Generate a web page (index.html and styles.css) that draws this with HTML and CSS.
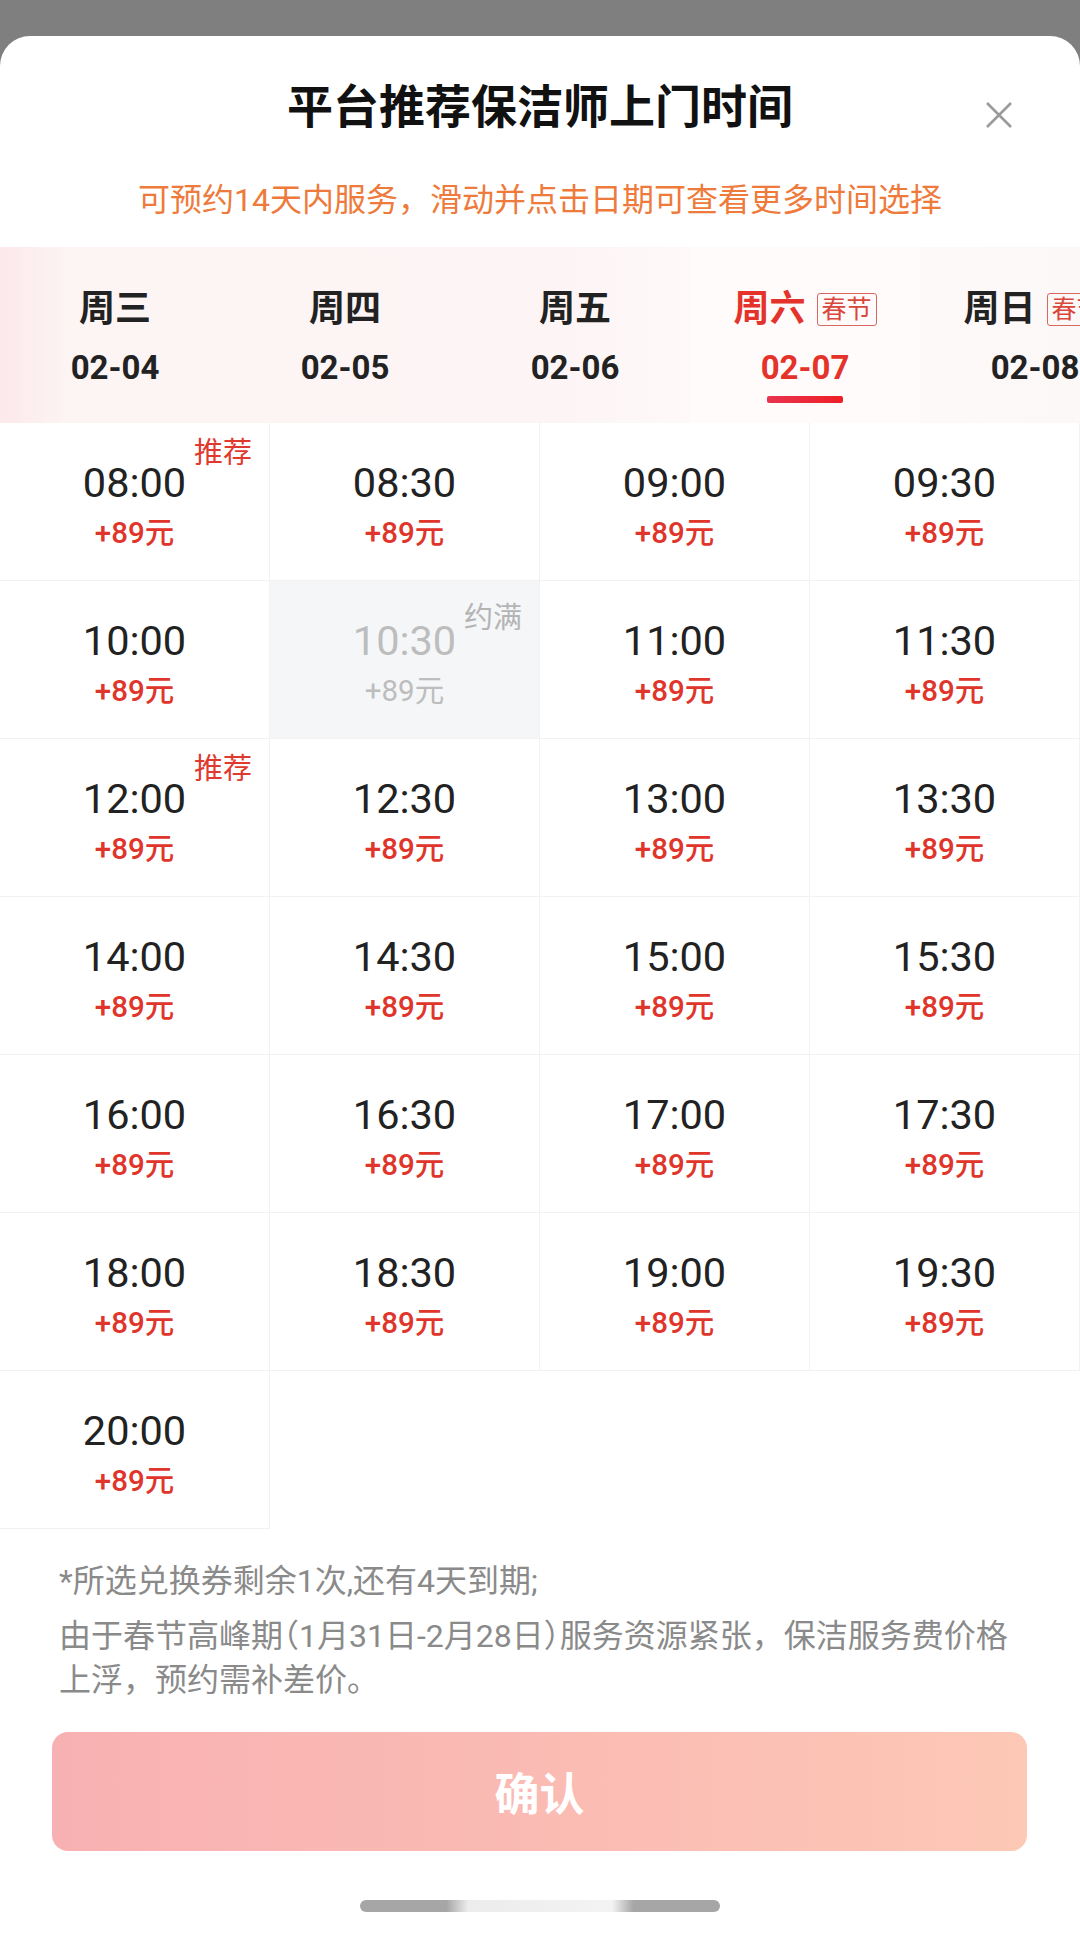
FILE: index.html
```html
<!DOCTYPE html>
<html lang="zh-CN">
<head>
  <meta charset="UTF-8">
  <meta name="viewport" content="width=device-width, initial-scale=1.0">
  <title>平台推荐保洁师上门时间</title>
  <link rel="stylesheet" href="styles.css">
</head>
<body>
  <div class="sheet">
    <div class="head">
      <h1>平台推荐保洁师上门时间</h1>
      <span class="close">
        <svg width="28" height="26" viewBox="0 0 28 26"><path d="M2 1 L26 25 M26 1 L2 25" stroke="#9a9a9a" stroke-width="2.6" fill="none"/></svg>
      </span>
    </div>
    <p class="tip">可预约14天内服务，滑动并点击日期可查看更多时间选择</p>

    <div class="days">
      <div class="day"><div class="wk">周三</div><div class="dt">02-04</div></div>
      <div class="day"><div class="wk">周四</div><div class="dt">02-05</div></div>
      <div class="day"><div class="wk">周五</div><div class="dt">02-06</div></div>
      <div class="day on"><div class="wk">周六<span class="fest">春节</span></div><div class="dt">02-07</div><i class="bar"></i></div>
      <div class="day"><div class="wk">周日<span class="fest">春节</span></div><div class="dt">02-08</div></div>
    </div>

    <div class="slots">
      <div class="slot"><span class="tag">推荐</span><div class="tm">08:00</div><div class="pr">+89元</div></div>
      <div class="slot"><div class="tm">08:30</div><div class="pr">+89元</div></div>
      <div class="slot"><div class="tm">09:00</div><div class="pr">+89元</div></div>
      <div class="slot"><div class="tm">09:30</div><div class="pr">+89元</div></div>

      <div class="slot"><div class="tm">10:00</div><div class="pr">+89元</div></div>
      <div class="slot full"><span class="tag">约满</span><div class="tm">10:30</div><div class="pr">+89元</div></div>
      <div class="slot"><div class="tm">11:00</div><div class="pr">+89元</div></div>
      <div class="slot"><div class="tm">11:30</div><div class="pr">+89元</div></div>

      <div class="slot"><span class="tag">推荐</span><div class="tm">12:00</div><div class="pr">+89元</div></div>
      <div class="slot"><div class="tm">12:30</div><div class="pr">+89元</div></div>
      <div class="slot"><div class="tm">13:00</div><div class="pr">+89元</div></div>
      <div class="slot"><div class="tm">13:30</div><div class="pr">+89元</div></div>

      <div class="slot"><div class="tm">14:00</div><div class="pr">+89元</div></div>
      <div class="slot"><div class="tm">14:30</div><div class="pr">+89元</div></div>
      <div class="slot"><div class="tm">15:00</div><div class="pr">+89元</div></div>
      <div class="slot"><div class="tm">15:30</div><div class="pr">+89元</div></div>

      <div class="slot"><div class="tm">16:00</div><div class="pr">+89元</div></div>
      <div class="slot"><div class="tm">16:30</div><div class="pr">+89元</div></div>
      <div class="slot"><div class="tm">17:00</div><div class="pr">+89元</div></div>
      <div class="slot"><div class="tm">17:30</div><div class="pr">+89元</div></div>

      <div class="slot"><div class="tm">18:00</div><div class="pr">+89元</div></div>
      <div class="slot"><div class="tm">18:30</div><div class="pr">+89元</div></div>
      <div class="slot"><div class="tm">19:00</div><div class="pr">+89元</div></div>
      <div class="slot"><div class="tm">19:30</div><div class="pr">+89元</div></div>

      <div class="slot"><div class="tm">20:00</div><div class="pr">+89元</div></div>
    </div>

    <div class="notes">
      <p>*所选兑换券剩余1次,还有4天到期;</p>
      <p>由于春节高峰期<span class="half">（1月31日-2月28日）</span>服务资源紧张，保洁服务费价格上浮，预约需补差价。</p>
    </div>

    <button type="button" class="ok">确认</button>
    <div class="home"><i></i></div>
  </div>
</body>
</html>
```

FILE: styles.css
```css
*{
  margin: 0;
  padding: 0;
  box-sizing: border-box;
}
body {
  background-color: #7f7f7f;
  font-family: Roboto, "Noto Sans CJK SC", sans-serif;
  color: #222;
  width: 1080px;
  height: 1939px;
  overflow: hidden;
}

.sheet {
  margin-top: 36px;
  height: 1903px;
  background-color: white;
  border-radius: 30px 30px 0 0;
  padding-top: 40px;
}

.head {
  position: relative;
  text-align: center;
}
h1 {
  font-size: 46px;
  line-height: 62px;
  font-weight: bold;
  color: #111;
}
.close {
  position: absolute;
  right: 67px;
  top: 26px;
  line-height: 0;
}

.tip {
  margin-top: 42px;
  text-align: center;
  font-size: 32px;
  line-height: 40px;
  color: #ee7a3b;
}

.days {
  margin-top: 27px;
  height: 176px;
  display: flex;
  overflow: hidden;
  background: linear-gradient(90deg, #fce9eb 0, #fdf4f4 70px, #fdf5f5 560px, #fffafa 760px, #fdf8f8 100%);
}
.day {
  flex: 0 0 230px;
  display: flex;
  flex-direction: column;
  align-items: center;
  padding-top: 39px;
}
.day.on {
  background-color: #fffbfb;
}
.wk {
  display: flex;
  align-items: center;
  white-space: nowrap;
  font-size: 36px;
  line-height: 46px;
  font-weight: bold;
  color: #222;
}
.fest {
  margin-left: 11px;
  font-size: 25px;
  line-height: 31px;
  font-weight: normal;
  padding: 0 4px;
  border: 1.5px solid #d8675f;
  border-radius: 3px;
  color: #d9473d;
}
.dt {
  margin-top: 14px;
  font-size: 33px;
  line-height: 44px;
  font-weight: bold;
  color: #222;
}
.day.on .wk,
.day.on .dt {
  color: #e4332a;
}
.bar {
  margin-top: 6px;
  width: 76px;
  height: 7px;
  border-radius: 2px;
  background: linear-gradient(90deg, #e8344f, #ee1f25);
}

.slots {
  display: grid;
  grid-template-columns: repeat(4, 270px);
  grid-auto-rows: 158px;
}
.slot {
  position: relative;
  text-align: center;
  padding-top: 36px;
  border-right: 1px solid #f2f2f2;
  border-bottom: 1px solid #f2f2f2;
}
.tm {
  font-size: 41.5px;
  line-height: 48px;
  color: #222;
}
.pr {
  margin-top: 8px;
  font-size: 29.5px;
  line-height: 36px;
  font-weight: 500;
  color: #e0352b;
}
.tag {
  position: absolute;
  top: 14px;
  right: 17px;
  font-size: 29px;
  line-height: 32px;
  color: #df3a30;
}
.slot.full {
  background-color: #f5f6f8;
}
.slot.full .tm,
.slot.full .pr {
  color: #bdbdbd;
  font-weight: normal;
}
.slot.full .tag {
  top: 21px;
  color: #b4b4b4;
}

.notes {
  padding: 30px 59px 0 59px;
  font-size: 32px;
  line-height: 44px;
  color: #8a8a8a;
}
.notes p + p {
  margin-top: 11px;
}
.notes .half {
  font-feature-settings: "halt";
}

.ok {
  display: block;
  margin: 30px 53px 0 52px;
  width: 975px;
  height: 119px;
  border: none;
  border-radius: 16px;
  background: linear-gradient(90deg, #f8b1b2, #fbbdb4 60%, #fdc8b6);
  color: white;
  font-family: Roboto, "Noto Sans CJK SC", sans-serif;
  font-size: 45px;
  font-weight: bold;
}

.home {
  display: flex;
  justify-content: center;
  padding-top: 49px;
}
.home i {
  display: block;
  width: 360px;
  height: 12px;
  border-radius: 6px;
  background: linear-gradient(90deg, #a6a6a6 0, #a6a6a6 24%, #ececec 30%, #f3f3f3 70%, #a6a6a6 76%, #a6a6a6 100%);
}
```
